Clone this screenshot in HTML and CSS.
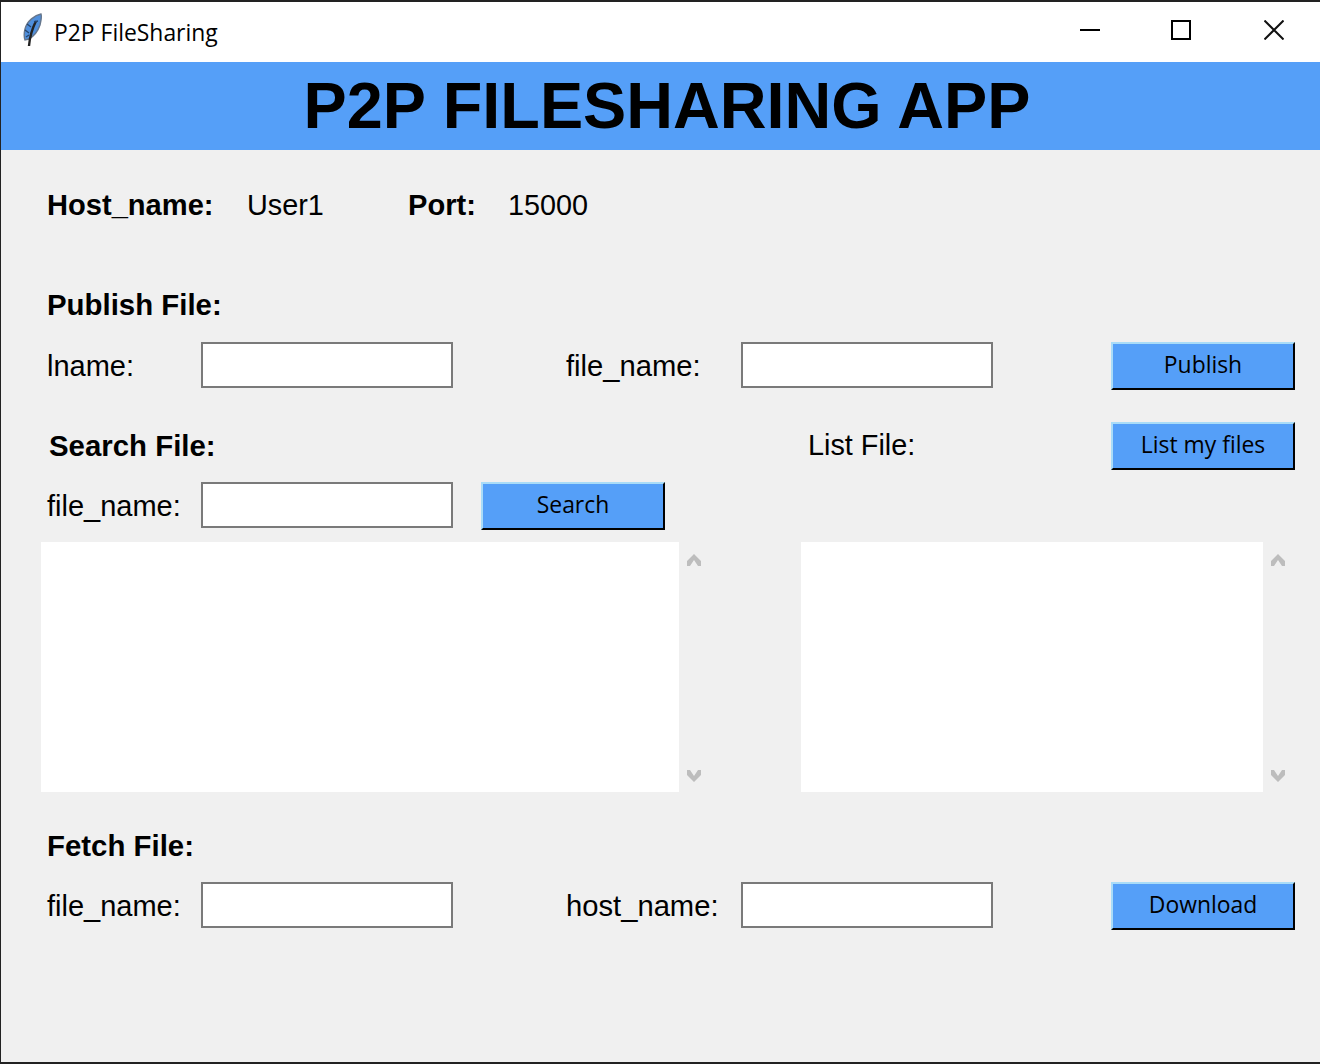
FILE: index.html
```html
<!DOCTYPE html>
<html lang="en">
<head>
<meta charset="utf-8">
<title>P2P FileSharing</title>
<link rel="stylesheet" href="styles.css">
</head>
<body>
<div class="window">
  <div class="titlebar">
    <svg class="feather" width="24" height="34" viewBox="0 0 24 34">
      <path d="M20 1C14 2 6 8 4 16c-1 4-1 8 0 11l4-1c5-3 9-8 11-14 1-4 2-8 1-11z" fill="#4f8fdc" stroke="#66768c" stroke-width="1.4"/>
      <path d="M15 8C12 14 9 21 8 33" fill="none" stroke="#222" stroke-width="2.4"/>
      <path d="M4 17l4 3M6 11l4 3M5 24l3-2M17 8l-4 1" stroke="#26456e" stroke-width="1.3"/>
    </svg>
    <span class="app-title">P2P FileSharing</span>
    <div class="controls">
      <svg class="ctl" width="20" height="20" viewBox="0 0 20 20"><path d="M0 10h20" stroke="#000" stroke-width="2"/></svg>
      <svg class="ctl" width="20" height="20" viewBox="0 0 20 20"><path d="M1 1h18v18H1z" fill="none" stroke="#000" stroke-width="2"/></svg>
      <svg class="ctl" width="20" height="20" viewBox="0 0 20 20"><path d="M0.5 0.5l19 19M19.5 0.5l-19 19" stroke="#111" stroke-width="2"/></svg>
    </div>
  </div>
  <header class="banner">P2P FILESHARING APP</header>
  <main class="content">
    <div class="info">
      <b class="host-key">Host_name:</b><span class="host-val">User1</span>
      <b class="port-key">Port:</b><span>15000</span>
    </div>
    <h2 class="section publish-title">Publish File:</h2>
    <div class="row form-row">
      <label>lname:</label><input class="field" type="text">
      <label class="second">file_name:</label><input class="field" type="text">
      <button class="btn">Publish</button>
    </div>
    <div class="row search-head">
      <h2 class="section search-title">Search File:</h2>
      <span class="list-label">List File:</span>
      <button class="btn">List my files</button>
    </div>
    <div class="row form-row search-row">
      <label>file_name:</label><input class="field" type="text">
      <button class="btn search-btn">Search</button>
    </div>
    <div class="lists">
      <div class="listbox wide"></div>
      <div class="scroll"><svg width="14" height="12" viewBox="0 0 14 12"><path d="M7 0L0 7v5h3l4-6 4 6h3V7z" fill="#bdbdbd"/></svg><svg width="14" height="12" viewBox="0 0 14 12"><path d="M7 12L0 5V0h3l4 6 4-6h3v5z" fill="#bdbdbd"/></svg></div>
      <div class="listbox narrow"></div>
      <div class="scroll"><svg width="14" height="12" viewBox="0 0 14 12"><path d="M7 0L0 7v5h3l4-6 4 6h3V7z" fill="#bdbdbd"/></svg><svg width="14" height="12" viewBox="0 0 14 12"><path d="M7 12L0 5V0h3l4 6 4-6h3v5z" fill="#bdbdbd"/></svg></div>
    </div>
    <h2 class="section fetch-title">Fetch File:</h2>
    <div class="row form-row">
      <label>file_name:</label><input class="field" type="text">
      <label class="second">host_name:</label><input class="field" type="text">
      <button class="btn">Download</button>
    </div>
  </main>
</div>
</body>
</html>
```
FILE: styles.css
```css
* { box-sizing: border-box; }
html, body { margin: 0; padding: 0; }
body { width: 1320px; height: 1064px; overflow: hidden; background: #222; }
.window {
  width: 1320px; height: 1064px;
  padding: 2px 0 2px 1px;
  display: flex; flex-direction: column;
  background: #222;
  font-family: "Liberation Sans", Arial, sans-serif;
  color: #000;
}
.titlebar {
  height: 60px; flex: none; background: #fff;
  display: flex; align-items: center;
  padding: 0 0 0 20px;
}
.feather { flex: none; margin-right: 9px; margin-top: -4px; }
.app-title { font: 22.9px "Open Sans", sans-serif; color: #000; }
.controls { margin-left: auto; display: flex; align-items: center; }
.ctl { display: block; margin-top: -4px; }
.ctl:nth-child(1) { margin-right: 71px; }
.ctl:nth-child(2) { margin-right: 73px; }
.ctl:nth-child(3) { margin-right: 36px; }
.banner {
  height: 88px; flex: none; background: #559ff8;
  text-align: center; line-height: 88px;
  font-size: 64.75px; font-weight: 700;
  padding-left: 13px;
}
.content {
  flex: 1; background: #f0f0f0;
  padding: 0 24px 0 46px;
  font-size: 28.8px;
}
.info { display: flex; align-items: center; height: 40px; margin-top: 35px; }
.info b { font-size: 29.1px; }
.host-key { width: 200px; }
.host-val { width: 161px; }
.port-key { width: 100px; }
.section { margin: 0; font-size: 29.4px; font-weight: 700; }
.publish-title { line-height: 40px; margin-top: 60px; height: 40px; }
.row { display: flex; align-items: flex-start; }
.form-row { height: 48px; margin-top: 17px; }
.form-row label { width: 154px; line-height: 48px; flex: none; font-size: 29px; }
.form-row label.second { width: 175px; margin-left: 113px; font-size: 29.2px; }
.field {
  width: 252px; height: 46px; flex: none;
  background: #fff; border: 2px solid #7a7a7a; border-radius: 0; padding: 0; margin: 0;
}
.btn {
  width: 184px; height: 48px; flex: none;
  margin: 0 0 0 118px; padding: 0 0 4px;
  background: #559ff8;
  border-style: solid; border-width: 2px;
  border-color: #a9dcf8 #000 #000 #a9dcf8;
  border-radius: 0;
  font: 22.9px "Open Sans", sans-serif; color: #000;
}
.search-head { height: 48px; margin-top: 32px; }
.search-title { line-height: 48px; width: 759px; margin-left: 2px; }
.list-label { width: 185px; line-height: 46px; flex: none; }
.search-head .btn { margin-left: 118px; }
.search-row { margin-top: 12px; }
.search-btn { margin-left: 28px; }
.lists { display: flex; height: 250px; margin: 12px 0 0 -6px; }
.listbox { background: #fff; height: 250px; flex: none; }
.wide { width: 638px; }
.narrow { width: 462px; }
.scroll { width: 30px; flex: none; display: flex; flex-direction: column; justify-content: space-between; align-items: center; padding: 12px 0 10px; }
.scroll svg { display: block; }
.scroll:nth-child(2) { margin-right: 92px; }
.fetch-title { line-height: 42px; height: 40px; margin-top: 33px; }
```
